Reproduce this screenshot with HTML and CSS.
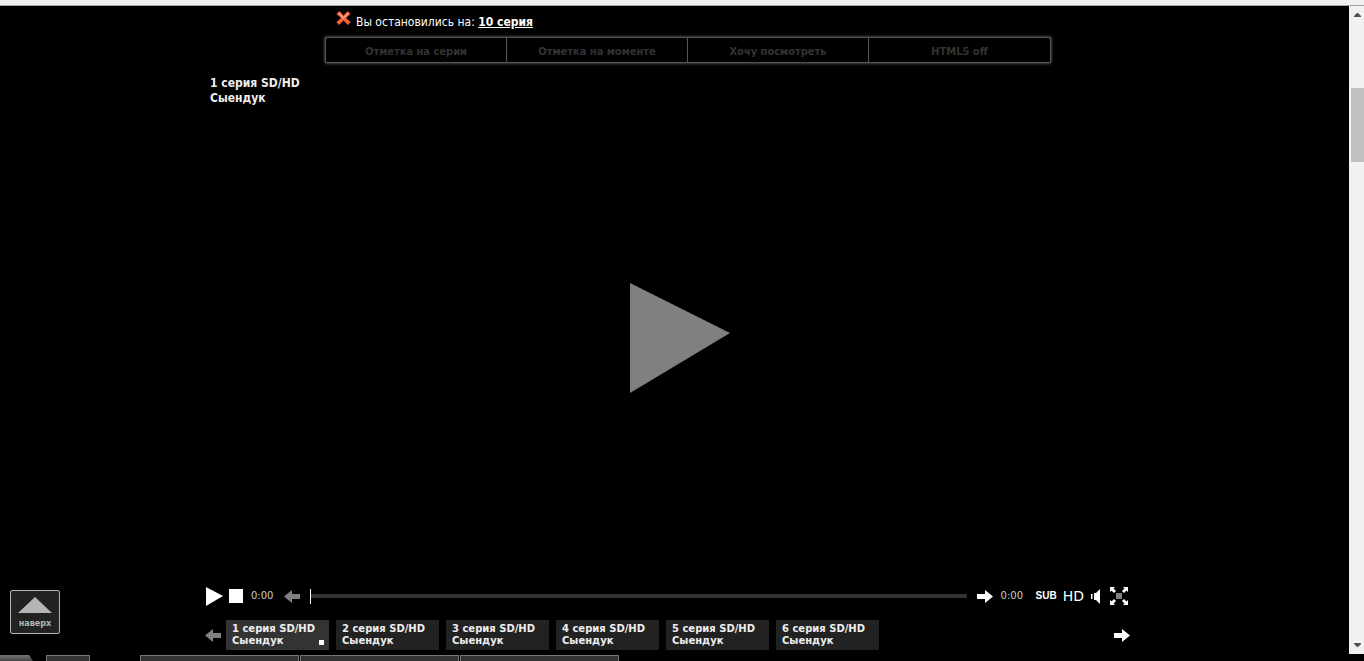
FILE: index.html
```html
<!DOCTYPE html>
<html lang="ru">
<head>
    <meta charset="UTF-8">
    <meta name="viewport" content="width=device-width, initial-scale=1.0">
    <title>1 серия SD/HD Сыендук</title>
    <link rel="stylesheet" href="styles.css">
</head>
<body>
    <div class="top-edge"></div>

    <div class="page">
        <main class="content">
            <!-- Notice and menu -->
            <div class="top">
                <div class="notice">
                    <button type="button" class="icon-btn close" aria-label="Закрыть">
                        <svg width="15" height="16" viewBox="0 0 15 16">
                            <path d="M0.500 4L3.500 1L7.500 5.500L11.500 1L14.500 4L10 8L14.500 12L12 15L7.500 10.500L3 15L0.500 12L5 8Z" fill="#f4673f" stroke="#8a2a18" stroke-width="0.600"/>
                            <path d="M2.500 3L7.500 8L12.500 3" stroke="#ffa080" stroke-width="1.500" fill="none"/>
                        </svg>
                    </button>
                    <p>Вы остановились на: <a href="#">10 серия</a></p>
                </div>
                <div class="menu">
                    <button type="button">Отметка на серии</button>
                    <button type="button">Отметка на моменте</button>
                    <button type="button">Хочу посмотреть</button>
                    <button type="button">HTML5 off</button>
                </div>
            </div>

            <!-- Player -->
            <div class="player">
                <h1 class="title">1 серия SD/HD<br>Сыендук</h1>
                <div class="stage">
                    <button type="button" class="icon-btn" aria-label="Смотреть">
                        <svg width="100" height="110" viewBox="0 0 100 110"><path d="M0 0L100 50L0 110Z" fill="#808080"/></svg>
                    </button>
                </div>

                <div class="controls">
                    <button type="button" class="icon-btn play" aria-label="Пуск">
                        <svg width="17" height="19" viewBox="0 0 17 19"><path d="M0 0L17 9L0 19Z" fill="#fff"/></svg>
                    </button>
                    <button type="button" class="icon-btn stop" aria-label="Стоп">
                        <svg width="14" height="14" viewBox="0 0 14 14"><path d="M0 0H14V14H0Z" fill="#fff"/></svg>
                    </button>
                    <span class="time">0:00</span>
                    <button type="button" class="icon-btn prev" aria-label="Предыдущая">
                        <svg width="16" height="13" viewBox="0 0 16 13"><path d="M0 6.5L8 0V4H16V9H8V13Z" fill="#808080"/></svg>
                    </button>
                    <input type="range" class="seek" min="0" max="100" value="0" aria-label="Перемотка">
                    <button type="button" class="icon-btn next" aria-label="Следующая">
                        <svg width="16" height="13" viewBox="0 0 16 13"><path d="M16 6.5L8 0V4H0V9H8V13Z" fill="#fff"/></svg>
                    </button>
                    <span class="time">0:00</span>
                    <button type="button" class="icon-btn sub">SUB</button>
                    <button type="button" class="icon-btn hd">HD</button>
                    <button type="button" class="icon-btn sound" aria-label="Звук">
                        <svg width="9" height="15" viewBox="0 0 9 15"><path d="M0 5H1.500V10H0ZM3 4H5L9 0V15L5 11H3Z" fill="#fff"/></svg>
                    </button>
                    <button type="button" class="icon-btn full" aria-label="Полный экран">
                        <svg width="18" height="18" viewBox="0 0 18 18">
                            <path d="M6 6H12V12H6Z" fill="#808080"/>
                            <path d="M0 0H5L3.500 1.500L6 4L4 6L1.500 3.500L0 5ZM18 0V5L16.500 3.500L14 6L12 4L14.500 1.500L13 0ZM0 18V13L1.500 14.500L4 12L6 14L3.500 16.500L5 18ZM18 18H13L14.500 16.500L12 14L14 12L16.500 14.500L18 13Z" fill="#fff"/>
                        </svg>
                    </button>
                </div>

                <div class="playlist">
                    <button type="button" class="icon-btn" aria-label="Назад">
                        <svg width="16" height="13" viewBox="0 0 16 13"><path d="M0 6.5L8 0V4H16V9H8V13Z" fill="#808080"/></svg>
                    </button>
                    <div class="episodes">
                        <button type="button" class="active">1 серия SD/HD<br>Сыендук</button>
                        <button type="button">2 серия SD/HD<br>Сыендук</button>
                        <button type="button">3 серия SD/HD<br>Сыендук</button>
                        <button type="button">4 серия SD/HD<br>Сыендук</button>
                        <button type="button">5 серия SD/HD<br>Сыендук</button>
                        <button type="button">6 серия SD/HD<br>Сыендук</button>
                    </div>
                    <button type="button" class="icon-btn" aria-label="Вперёд">
                        <svg width="16" height="13" viewBox="0 0 16 13"><path d="M16 6.5L8 0V4H0V9H8V13Z" fill="#fff"/></svg>
                    </button>
                </div>
            </div>

            <button type="button" class="to-top">
                <svg width="34" height="16" viewBox="0 0 34 16"><path d="M0 16L17 0L34 16Z" fill="#b5b5b5"/></svg>
                наверх
            </button>
        </main>

        <div class="scrollbar">
            <svg width="7" height="4" viewBox="0 0 7 4"><path d="M0 4V3L3 0H4L7 3V4Z" fill="#505050"/></svg>
            <div class="thumb"></div>
            <svg width="7" height="4" viewBox="0 0 7 4"><path d="M0 0V1L3 4H4L7 1V0Z" fill="#505050"/></svg>
        </div>
    </div>

    <!-- Bottom panel -->
    <div class="panel">
        <div class="start"></div>
        <div class="tab small"></div>
        <div class="tab"></div>
        <div class="tab"></div>
        <div class="tab"></div>
    </div>
</body>
</html>
```

FILE: styles.css
```css
* {
    box-sizing: border-box;
}
body {
    display: flex;
    flex-direction: column;
    height: 100vh;
    margin: 0;
    overflow: hidden;
    background: #000;
    color: #fff;
    font-family: "DejaVu Sans Condensed", Tahoma, sans-serif;
    font-size: 12px;
}
button {
    font-family: inherit;
    cursor: pointer;
}
svg {
    display: block;
}
.top-edge {
    height: 6px;
    background: #f1f1f1;
    border-bottom: 1px solid #a0a8a0;
}
.page {
    display: flex;
    flex: 1;
    min-height: 0;
}
.content {
    position: relative;
    display: flex;
    flex: 1;
    flex-direction: column;
    align-items: center;
}
.icon-btn {
    flex: none;
    padding: 0;
    border: none;
    background: none;
    color: #fff;
}

/* Notice and menu */
.top {
    width: 753px;
    padding-left: 27px;
}
.notice {
    display: flex;
    height: 31px;
    padding: 4px 0 0 11px;
    gap: 5px;
    line-height: 24px;
}
.notice p {
    margin: 0;
}
.notice a {
    color: #fff;
    font-weight: bold;
}
.close {
    align-self: flex-start;
}
.menu {
    display: flex;
    border: 1px solid #555;
    box-shadow: 0 0 3px #777;
}
.menu button {
    width: 181px;
    height: 24px;
    padding: 2px 0 0;
    border: none;
    border-right: 1px solid #555;
    background: #000;
    color: #333;
    font-size: 11px;
    font-weight: bold;
}
.menu button:last-child {
    border-right: none;
}

/* Player */
.player {
    display: flex;
    flex: 1;
    flex-direction: column;
    width: 945px;
    padding: 13px 17px 4px 3px;
}
.title {
    margin: 0;
    padding-left: 5px;
    color: #eee;
    font-size: 12px;
    line-height: 15px;
}
.stage {
    display: flex;
    flex: 1;
    align-items: center;
    justify-content: center;
    padding: 0 0 17px 25px;
}
.controls {
    display: flex;
    align-items: center;
    height: 20px;
    margin-bottom: 14px;
    padding: 0 2px 0 1px;
}
.stop {
    margin-left: 6px;
}
.time {
    width: 33px;
    padding-left: 8px;
    color: #ccc;
    font-family: "DejaVu Sans", Verdana, sans-serif;
    font-size: 10px;
    line-height: 14px;
}
.prev {
    margin: 0 10px 0 8px;
}
.seek {
    flex: 1;
    min-width: 0;
    height: 15px;
    margin: 0;
    appearance: none;
    background: linear-gradient(#333, #333) center / 100% 4px no-repeat;
}
.seek::-webkit-slider-thumb {
    appearance: none;
    width: 1px;
    height: 15px;
    background: #fff;
}
.next {
    margin-left: 10px;
}
.sub {
    margin-left: 10px;
    font-family: "Liberation Sans", Arial, sans-serif;
    font-size: 10px;
    font-weight: bold;
    line-height: 14px;
}
.hd {
    margin-left: 6px;
    font-family: "DejaVu Sans", Verdana, sans-serif;
    font-size: 14px;
}
.sound {
    margin-left: 7px;
}
.full {
    margin-left: 10px;
}

/* Playlist */
.playlist {
    display: flex;
    align-items: center;
    justify-content: space-between;
}
.episodes {
    display: flex;
    flex: 1;
    gap: 7px;
    padding-left: 5px;
}
.episodes button {
    position: relative;
    width: 103px;
    height: 30px;
    padding: 0 0 0 6px;
    border: none;
    background: #222;
    color: #eee;
    font-family: "DejaVu Sans", Verdana, sans-serif;
    font-size: 10px;
    font-weight: bold;
    line-height: 12px;
    text-align: left;
    white-space: nowrap;
}
.episodes .active {
    background: #333;
}
.episodes .active::after {
    content: "";
    position: absolute;
    right: 5px;
    bottom: 5px;
    width: 5px;
    height: 5px;
    background: #fff;
}

.to-top {
    position: absolute;
    left: 10px;
    bottom: 20px;
    display: flex;
    flex-direction: column;
    align-items: center;
    width: 50px;
    height: 44px;
    padding: 6px 0 0;
    gap: 5px;
    border: 1px solid #b5b5b5;
    border-radius: 2px;
    background: #222;
    color: #b5b5b5;
    font-size: 9px;
    font-weight: bold;
    line-height: 10px;
}

/* Scrollbar */
.scrollbar {
    display: flex;
    flex-direction: column;
    align-items: center;
    width: 15px;
    padding: 7px 0 7px 2px;
    background: #f1f1f1;
}
.thumb {
    width: 100%;
    height: 74px;
    margin: 71px 0 auto;
    background: #c1c1c1;
}

/* Bottom panel */
.panel {
    display: flex;
    height: 7px;
    padding-top: 1px;
    gap: 1px;
}
.start {
    width: 33px;
    margin-right: 12px;
    background: linear-gradient(#777, #444);
    clip-path: polygon(0 0, 29px 0, 33px 6px, 0 6px);
}
.tab {
    width: 159px;
    border: 1px solid #777;
    border-bottom: none;
    background: #333;
}
.small {
    width: 44px;
    margin-right: 49px;
}
```
